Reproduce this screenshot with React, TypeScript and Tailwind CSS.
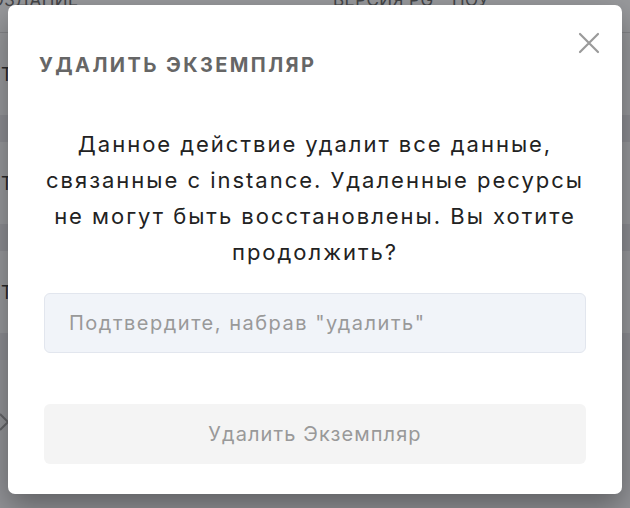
const rows = [0, 1, 2];

function Backdrop() {
  return (
    <div className="flex flex-col w-full h-full bg-[#f3f3f5] text-[#333]">
      <div className="flex items-start h-[33px] text-[17px] leading-none tracking-wide text-[#666] bg-white border-b border-[#ddd] overflow-hidden">
        <span className="w-[333px] shrink-0 -mt-[8px] -ml-[22px]">СОЗДАНИЕ</span>
        <span className="w-[119px] shrink-0 -mt-[8px] ml-[22px]">ВЕРСИЯ PG</span>
        <span className="-mt-[8px]">ПОУ</span>
      </div>
      {rows.map((r) => (
        <div key={r} className="flex flex-col">
          <div className="flex items-center h-[82px] bg-white text-[18px] pl-[1px]">
            <span>Ta</span>
          </div>
          <div className="h-[27px] bg-[#ececef]" />
        </div>
      ))}
      <div className="flex-1 bg-[#f4f4f6] flex items-start pt-[52px]">
        <svg width="10" height="20" viewBox="0 0 10 20" fill="none" stroke="#a0a0a0" strokeWidth="2">
          <path d="M0 2 L8 10 L0 18" />
        </svg>
      </div>
    </div>
  );
}

export default function App() {
  return (
    <div className="relative w-[630px] h-[508px] overflow-hidden font-[Inter,'Noto_Sans',sans-serif]">
      <Backdrop />
      <div className="absolute inset-0 bg-[#1a1c24]/45" />
      <div className="absolute left-[8px] top-[5px] w-[614px] h-[489px] bg-white rounded-[7px] shadow-[0_12px_30px_rgba(0,0,0,0.35)] flex flex-col px-[36px]">
        <button className="absolute right-[22px] top-[27px] text-[#9a9a9a]">
          <svg width="22" height="22" viewBox="0 0 22 22" fill="none" stroke="currentColor" strokeWidth="2.2" strokeLinecap="round">
            <path d="M2 2 L20 20 M20 2 L2 20" />
          </svg>
        </button>
        <h2 className="mt-[48px] -ml-[5px] text-[20px] leading-[24px] font-bold tracking-[0.12em] text-[#666]">
          УДАЛИТЬ ЭКЗЕМПЛЯР
        </h2>
        <p className="mt-[49px] text-center text-[22px] leading-[36px] tracking-[0.09em] text-[#222]">
          Данное действие удалит все данные, связанные с instance. Удаленные ресурсы не могут быть восстановлены. Вы хотите продолжить?
        </p>
        <input
          className="mt-[23px] h-[60px] w-full rounded-[6px] border border-[#e2e6ee] bg-[#f1f4f9] px-[24px] text-[20px] tracking-[0.075em] text-[#333] placeholder:text-[#999] outline-none"
          placeholder='Подтвердите, набрав "удалить"'
        />
        <button
          disabled
          className="mt-[51px] h-[60px] w-full rounded-[6px] bg-[#f4f4f4] text-[20px] tracking-[0.055em] text-[#999]"
        >
          Удалить Экземпляр
        </button>
      </div>
    </div>
  );
}
